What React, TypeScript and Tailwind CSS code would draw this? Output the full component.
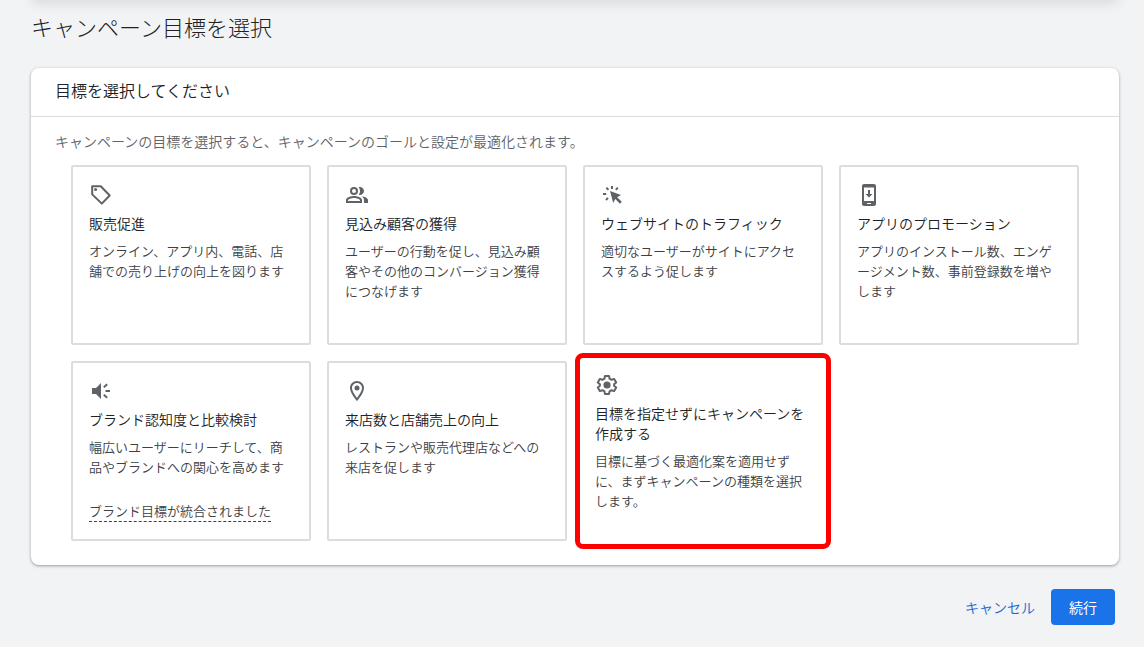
import React, { useState } from 'react';

type Goal = {
  id: string;
  title: string;
  description: string;
  icon: React.ReactNode;
  note?: string;
};

const tagIcon = (
  <>
    <path d="M3.2 3.2h8.6l8.9 9.3-7.9 8.1-9.6-9.2z" fill="none" stroke="currentColor" strokeWidth="2" strokeLinejoin="round" />
    <circle cx="6.6" cy="6.6" r="1.5" />
  </>
);

const peopleIcon = (
  <>
    <circle cx="9" cy="8" r="3" fill="none" stroke="currentColor" strokeWidth="2" />
    <path d="M15 4c2.2 0 4 1.8 4 4s-1.8 4-4 4c-.47 0-.91-.1-1.33-.24C14.5 10.7 15 9.4 15 8s-.5-2.7-1.33-3.76C14.09 4.1 14.53 4 15 4z" />
    <path fillRule="evenodd" d="M1 20v-3c0-2.66 5.33-4 8-4s8 1.34 8 4v3H1zm2-2h12v-.99C14.8 16.29 11.7 15 9 15s-5.8 1.29-6 2z" />
    <path d="M16.67 13.13C18.04 14.06 19 15.32 19 17v3h4v-3c0-2.18-3.57-3.47-6.33-3.87z" />
  </>
);

const clickIcon = (
  <>
    <path d="M9 8l11 4-3.8 2.2 4.6 4.6-1.9 1.9-4.6-4.6-2.1 4z" />
    <path d="M11 3v3M5.4 4.600l2 2.200M16.800 4.600l-2 2.200M2 11h3.200M5 17l2-2.200" fill="none" stroke="currentColor" strokeWidth="2" />
  </>
);

const phoneIcon = (
  <>
    <path fillRule="evenodd" d="M7 1h10c1.1 0 2 .9 2 2v18c0 1.1-.9 2-2 2H7c-1.1 0-2-.9-2-2V3c0-1.1.9-2 2-2zm0 3.500v13.500h10V4.500zM10 20v1h4v-1z" />
    <path d="M11 7h2v4h2.500L12 14.600 8.500 11H11z" />
  </>
);

const speakerIcon = (
  <>
    <path d="M3 9h4l5-5v16l-5-5H3z" />
    <path d="M16.500 12h4.500M14.800 8.200l3.400-2.900M14.800 15.800l3.400 2.900" fill="none" stroke="currentColor" strokeWidth="2" />
  </>
);

const pinIcon = (
  <>
    <path fillRule="evenodd" d="M12 2C8.130 2 5 5.130 5 9c0 5.250 7 13 7 13s7-7.750 7-13c0-3.870-3.130-7-7-7zM7 9c0-2.760 2.240-5 5-5s5 2.240 5 5c0 2.880-2.880 7.190-5 9.880C9.920 16.210 7 11.850 7 9z" />
    <circle cx="12" cy="9" r="2.500" />
  </>
);

const gearIcon = (
  <>
    <path
      d="M10 3h4l.6 2.700 1.900 1.100 2.700-.9 2 3.500-2.100 1.800v1.600l2.100 1.800-2 3.500-2.700-.9-1.900 1.100L14 21h-4l-.6-2.700-1.900-1.100-2.700.9-2-3.500 2.100-1.800v-1.600L2.800 9.400l2-3.500 2.700.9 1.900-1.100z"
      fill="none"
      stroke="currentColor"
      strokeWidth="2"
      strokeLinejoin="round"
    />
    <circle cx="12" cy="12" r="3.600" />
  </>
);

const goals: Goal[] = [
  { id: 'sales', title: '販売促進', description: 'オンライン、アプリ内、電話、店舗での売り上げの向上を図ります', icon: tagIcon },
  { id: 'leads', title: '見込み顧客の獲得', description: 'ユーザーの行動を促し、見込み顧客やその他のコンバージョン獲得につなげます', icon: peopleIcon },
  { id: 'traffic', title: 'ウェブサイトのトラフィック', description: '適切なユーザーがサイトにアクセスするよう促します', icon: clickIcon },
  { id: 'app', title: 'アプリのプロモーション', description: 'アプリのインストール数、エンゲージメント数、事前登録数を増やします', icon: phoneIcon },
  { id: 'brand', title: 'ブランド認知度と比較検討', description: '幅広いユーザーにリーチして、商品やブランドへの関心を高めます', icon: speakerIcon, note: 'ブランド目標が統合されました' },
  { id: 'store', title: '来店数と店舗売上の向上', description: 'レストランや販売代理店などへの来店を促します', icon: pinIcon },
  { id: 'none', title: '目標を指定せずにキャンペーンを作成する', description: '目標に基づく最適化案を適用せずに、まずキャンペーンの種類を選択します。', icon: gearIcon },
];

function GoalCard({ goal, active, onSelect }: { goal: Goal; active: boolean; onSelect: () => void }) {
  return (
    <li
      className={
        active
          ? '-m-2 rounded-lg border-5 border-[#ff0000] bg-white p-[15px]'
          : 'min-h-[180px] rounded-xs border-2 border-[#dadce0] bg-white p-4'
      }
    >
      <button type="button" aria-pressed={active} onClick={onSelect} className="block w-full cursor-pointer text-left">
        <svg viewBox="0 0 24 24" className="block size-6 text-[#5f6368]" fill="currentColor" aria-hidden="true">
          {goal.icon}
        </svg>
        <span className="mt-1.5 block text-[14px] leading-5 text-[#202124]">{goal.title}</span>
        <span className="mt-2 block text-[13px] leading-5 text-[#3c4043]">{goal.description}</span>
      </button>
      {goal.note && (
        <button type="button" className="mt-6 block border-b border-dashed border-[#3c4043] text-[13px] leading-5 text-[#3c4043]">
          {goal.note}
        </button>
      )}
    </li>
  );
}

export default function App() {
  const [selected, setSelected] = useState('none');

  return (
    <div
      lang="ja"
      className="min-h-screen overflow-hidden bg-[#f1f3f4] pr-[25px] pb-[22px] pl-[31px] font-['Noto_Sans_CJK_JP',sans-serif] font-[350] [line-break:loose]"
    >
      <div className="-mt-4 h-4 rounded-lg bg-white shadow-[0_4px_12px_rgba(60,64,67,0.13)]" />
      <h1 className="pt-2.5 text-[22px] leading-8 font-light text-[#202124]">キャンペーン目標を選択</h1>

      <section className="mt-[26px] rounded-lg bg-white shadow-[0_1px_2px_rgba(60,64,67,0.3),0_1px_3px_1px_rgba(60,64,67,0.15)]">
        <h2 className="border-b border-[#dadce0] px-6 pt-2.5 pb-3.5 text-[16px] leading-6 text-[#202124]">目標を選択してください</h2>
        <p className="px-6 pt-3.5 text-[14px] leading-5 text-[#5f6368]">
          キャンペーンの目標を選択すると、キャンペーンのゴールと設定が最適化されます。
        </p>
        <ul className="grid grid-cols-4 gap-4 px-10 pt-3.5 pb-6">
          {goals.map((goal) => (
            <GoalCard key={goal.id} goal={goal} active={goal.id === selected} onSelect={() => setSelected(goal.id)} />
          ))}
        </ul>
      </section>

      <div className="mt-6 flex justify-end gap-4 pr-1">
        <button type="button" className="h-9 text-[14px] text-[#1967d2]">
          キャンセル
        </button>
        <button type="button" className="h-9 w-16 rounded-sm bg-[#1a73e8] text-[14px] font-normal text-white">
          続行
        </button>
      </div>
    </div>
  );
}
